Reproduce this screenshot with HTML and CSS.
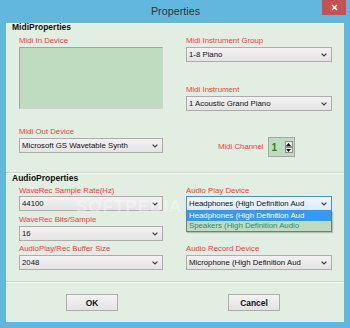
FILE: index.html
```html
<!DOCTYPE html>
<html>
<head>
<meta charset="utf-8">
<link rel="stylesheet" href="styles.css">
</head>
<body>
<div class="window">
  <div class="titlebar">
    <span class="title">Properties</span>
    <div class="close"><svg width="7" height="7" viewBox="0 0 7 7"><path d="M1 1 L6 6 M6 1 L1 6" stroke="#fff" stroke-width="1.5"/></svg></div>
  </div>
  <div class="client">
    <div class="group-title">MidiProperties</div>
    <div class="grid midi">
      <div class="col">
        <div class="label">Midi In Device</div>
        <div class="listbox"></div>
        <div class="label mt18">Midi Out Device</div>
        <div class="combo"><span>Microsoft GS Wavetable Synth</span><svg class="chev" width="6" height="4" viewBox="0 0 6 4"><path d="M0.6 0.6 L3 3 L5.4 0.6" fill="none" stroke="#3c3c3c" stroke-width="1.2"/></svg></div>
      </div>
      <div class="col">
        <div class="label">Midi Instrument Group</div>
        <div class="combo"><span>1-8 Piano</span><svg class="chev" width="6" height="4" viewBox="0 0 6 4"><path d="M0.6 0.6 L3 3 L5.4 0.6" fill="none" stroke="#3c3c3c" stroke-width="1.2"/></svg></div>
        <div class="label mt23">Midi Instrument</div>
        <div class="combo"><span>1 Acoustic Grand Piano</span><svg class="chev" width="6" height="4" viewBox="0 0 6 4"><path d="M0.6 0.6 L3 3 L5.4 0.6" fill="none" stroke="#3c3c3c" stroke-width="1.2"/></svg></div>
        <div class="channel-row">
          <span class="label">Midi Channel</span>
          <div class="spin">
            <span class="spin-val">1</span>
            <div class="spin-btns">
              <div class="spin-btn"><svg width="5" height="3" viewBox="0 0 5 3"><path d="M0 3 L2.5 0 L5 3 Z" fill="#111"/></svg></div>
              <div class="spin-btn"><svg width="5" height="3" viewBox="0 0 5 3"><path d="M0 0 L2.5 3 L5 0 Z" fill="#111"/></svg></div>
            </div>
          </div>
        </div>
      </div>
    </div>
    <div class="sep sep1"></div>
    <div class="group-title">AudioProperties</div>
    <div class="grid audio">
      <div class="col">
        <div class="label">WaveRec Sample Rate(Hz)</div>
        <div class="combo mt0"><span>44100</span><svg class="chev" width="6" height="4" viewBox="0 0 6 4"><path d="M0.6 0.6 L3 3 L5.4 0.6" fill="none" stroke="#3c3c3c" stroke-width="1.2"/></svg></div>
        <div class="label mt4">WaveRec Bits/Sample</div>
        <div class="combo"><span>16</span><svg class="chev" width="6" height="4" viewBox="0 0 6 4"><path d="M0.6 0.6 L3 3 L5.4 0.6" fill="none" stroke="#3c3c3c" stroke-width="1.2"/></svg></div>
        <div class="label mt3">AudioPlay/Rec Buffer Size</div>
        <div class="combo"><span>2048</span><svg class="chev" width="6" height="4" viewBox="0 0 6 4"><path d="M0.6 0.6 L3 3 L5.4 0.6" fill="none" stroke="#3c3c3c" stroke-width="1.2"/></svg></div>
      </div>
      <div class="col">
        <div class="label">Audio Play Device</div>
        <div class="combo-wrap">
          <div class="combo focused mt0"><span>Headphones (High Definition Aud</span><svg class="chev" width="6" height="4" viewBox="0 0 6 4"><path d="M0.6 0.6 L3 3 L5.4 0.6" fill="none" stroke="#3c3c3c" stroke-width="1.2"/></svg></div>
          <div class="dropdown">
            <div class="opt sel">Headphones (High Definition Aud</div>
            <div class="opt alt">Speakers (High Definition Audio</div>
          </div>
        </div>
        <div class="label mt33">Audio Record Device</div>
        <div class="combo"><span>Microphone (High Definition Aud</span><svg class="chev" width="6" height="4" viewBox="0 0 6 4"><path d="M0.6 0.6 L3 3 L5.4 0.6" fill="none" stroke="#3c3c3c" stroke-width="1.2"/></svg></div>
      </div>
    </div>
    <div class="sep sep2"></div>
    <div class="buttons">
      <div class="btn">OK</div>
      <div class="btn">Cancel</div>
    </div>
    <div class="watermark">SOFTPEDIA</div>
  </div>
</div>
</body>
</html>
```
FILE: styles.css
```css
html, body {
  margin: 0;
  padding: 0;
}
body {
  font-family: "Liberation Sans", Arial, sans-serif;
}
.window {
  width: 350px;
  height: 328px;
  background: #62b7de;
  display: flex;
  flex-direction: column;
  box-sizing: border-box;
}
.titlebar {
  height: 23px;
  position: relative;
  display: flex;
  justify-content: center;
}
.title {
  font-size: 10.8px;
  color: #333;
  line-height: 22px;
  padding-left: 1px;
}
.close {
  position: absolute;
  top: 0;
  right: 4px;
  width: 24px;
  height: 15px;
  background: #c75050;
  display: flex;
  align-items: center;
  justify-content: center;
}
.client {
  position: relative;
  margin: 0 6px;
  height: 299px;
  background: #e1eee1;
  box-shadow: inset 0 1px 0 #f3f9f3;
  display: flex;
  flex-direction: column;
}
.group-title {
  font-weight: bold;
  font-size: 8.5px;
  line-height: 9px;
  height: 9px;
  padding-left: 6px;
  color: #111;
}
.grid {
  display: grid;
  grid-template-columns: 144px 146px;
  column-gap: 23px;
  padding-left: 13px;
}
.midi { margin-top: 4px; }
.audio { margin-top: 3px; }
.col {
  display: flex;
  flex-direction: column;
  align-items: stretch;
}
.label {
  font-size: 7.8px;
  line-height: 10px;
  height: 10px;
  color: #f43c3c;
  white-space: nowrap;
}
.mt18 { margin-top: 18px; }
.mt23 { margin-top: 23px; }
.mt33 { margin-top: 33px; }
.mt4 { margin-top: 4px; }
.mt3 { margin-top: 3px; }
.listbox {
  margin-top: 1px;
  height: 62px;
  box-sizing: border-box;
  background: #c0dcc0;
  border: 1px solid #a3a3a3;
  border-right-color: #d2d2d2;
  border-bottom-color: #d2d2d2;
}
.combo {
  margin-top: 1px;
  height: 15px;
  box-sizing: border-box;
  border: 1px solid #acacac;
  background: linear-gradient(#f2f2f2, #e4e4e4);
  display: flex;
  align-items: center;
  justify-content: space-between;
  padding: 0 4px 0 2px;
  font-size: 7.8px;
  color: #111;
  white-space: nowrap;
}
.combo.mt0 { margin-top: 0; }
.combo.focused {
  border-color: #4a8fd0;
  background: linear-gradient(#eef6fc, #dcecf9);
}
.chev { flex: none; }
.combo-wrap {
  position: relative;
  display: flex;
  flex-direction: column;
}
.dropdown {
  position: absolute;
  top: 100%;
  left: 0;
  width: 146px;
  box-sizing: border-box;
  border: 1px solid #7a7a7a;
  border-top: none;
  background: #c0dcc0;
  box-shadow: 1px 1px 1px rgba(0,0,0,0.2);
  z-index: 2;
}
.opt {
  height: 10px;
  line-height: 10px;
  font-size: 7.8px;
  padding-left: 2px;
  white-space: nowrap;
}
.opt.sel {
  background: #3399ff;
  color: #fff;
}
.opt.alt {
  color: #1f8a7e;
}
.channel-row {
  margin-top: 26px;
  height: 20px;
  display: flex;
  align-items: center;
  gap: 4px;
  padding-left: 32px;
}
.spin {
  width: 27px;
  height: 20px;
  box-sizing: border-box;
  border: 1px solid #a5a5a5;
  background: #c0dcc0;
  display: flex;
  align-items: center;
  justify-content: space-between;
  padding: 0 1px 0 3px;
}
.spin-val {
  font-weight: bold;
  font-size: 10px;
  color: #1e8a1e;
}
.spin-btns {
  display: flex;
  flex-direction: column;
  gap: 0;
}
.spin-btn {
  width: 8px;
  height: 6px;
  box-sizing: border-box;
  border: 1px solid #8e8e8e;
  background: #ececec;
  display: flex;
  align-items: center;
  justify-content: center;
}
.sep {
  height: 0;
  border-top: 1px solid #c9d7c9;
  border-bottom: 1px solid #f5faf5;
}
.sep1 { margin-top: 15px; }
.sep2 { margin-top: 11px; }
.buttons {
  display: flex;
  gap: 110px;
  padding-left: 60px;
  padding-top: 11px;
}
.btn {
  width: 52px;
  height: 17px;
  box-sizing: border-box;
  border: 1px solid #adadad;
  background: linear-gradient(#f3f3f3, #e3e3e3);
  display: flex;
  align-items: center;
  justify-content: center;
  font-weight: bold;
  font-size: 8.4px;
  color: #111;
}
.watermark {
  position: absolute;
  left: 70px;
  top: 174px;
  font-size: 17px;
  line-height: 20px;
  font-weight: bold;
  letter-spacing: 1px;
  color: rgba(255,255,255,0.35);
  pointer-events: none;
  z-index: 1;
}
```
